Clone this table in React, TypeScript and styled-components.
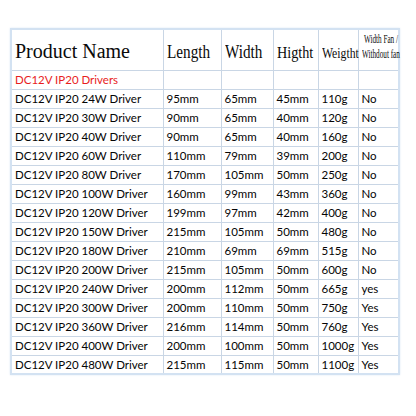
import styled, { createGlobalStyle } from 'styled-components';

const GlobalStyle = createGlobalStyle`
    html, body {
        margin: 0;
        padding: 0;
        background: #ffffff;
    }
`;

const Page = styled.div`
    width: 416px;
    height: 416px;
    padding: 28px 0 0 10px;
    box-sizing: border-box;
`;

const Table = styled.table`
    border-collapse: collapse;
    width: 390px;
    table-layout: fixed;
    border: 2px solid #d3e2f2;
    box-shadow: 0 0 2px #dce8f4;
`;

const HeadCell = styled.th`
    height: 41px;
    padding: 0 0 8px 3px;
    box-sizing: border-box;
    border: 1px solid #c9d6e5;
    font-family: 'Liberation Serif', 'Times New Roman', serif;
    font-weight: normal;
    color: #0a0a0a;
    text-align: left;
    vertical-align: bottom;
    white-space: nowrap;
`;

const HeadText = styled.span<{ $size: number; $scale: number }>`
    display: inline-block;
    font-size: ${({ $size }) => $size}px;
    line-height: 1;
    transform: scaleX(${({ $scale }) => $scale});
    transform-origin: left bottom;
`;

const FanText = styled.span`
    display: inline-block;
    font-size: 12px;
    line-height: 15px;
    text-align: center;
    transform: scaleX(0.6);
    transform-origin: left bottom;
    margin-bottom: -3px;
`;

const Cell = styled.td<{ $red?: boolean }>`
    height: 19px;
    padding: 0 0 0 3px;
    box-sizing: border-box;
    border: 1px solid #c9d6e5;
    font-family: Lato, 'Open Sans', sans-serif;
    font-size: 11.5px;
    color: ${({ $red }) => ($red ? '#e81d1d' : '#050505')};
    white-space: nowrap;
`;

const widths = [152, 58, 52, 45, 40, 41];

const rows = [
    ['DC12V IP20 24W Driver', '95mm', '65mm', '45mm', '110g', 'No'],
    ['DC12V IP20 30W Driver', '90mm', '65mm', '40mm', '120g', 'No'],
    ['DC12V IP20 40W Driver', '90mm', '65mm', '40mm', '160g', 'No'],
    ['DC12V IP20 60W Driver', '110mm', '79mm', '39mm', '200g', 'No'],
    ['DC12V IP20 80W Driver', '170mm', '105mm', '50mm', '250g', 'No'],
    ['DC12V IP20 100W Driver', '160mm', '99mm', '43mm', '360g', 'No'],
    ['DC12V IP20 120W Driver', '199mm', '97mm', '42mm', '400g', 'No'],
    ['DC12V IP20 150W Driver', '215mm', '105mm', '50mm', '480g', 'No'],
    ['DC12V IP20 180W Driver', '210mm', '69mm', '69mm', '515g', 'No'],
    ['DC12V IP20 200W Driver', '215mm', '105mm', '50mm', '600g', 'No'],
    ['DC12V IP20 240W Driver', '200mm', '112mm', '50mm', '665g', 'yes'],
    ['DC12V IP20 300W Driver', '200mm', '110mm', '50mm', '750g', 'Yes'],
    ['DC12V IP20 360W Driver', '216mm', '114mm', '50mm', '760g', 'Yes'],
    ['DC12V IP20 400W Driver', '200mm', '100mm', '50mm', '1000g', 'Yes'],
    ['DC12V IP20 480W Driver', '215mm', '115mm', '50mm', '1100g', 'Yes'],
];

const App = () => (
    <Page>
        <GlobalStyle />
        <Table>
            <colgroup>
                {widths.map((w, i) => (
                    <col key={i} style={{ width: w }} />
                ))}
            </colgroup>
            <thead>
                <tr>
                    <HeadCell>
                        <HeadText $size={20} $scale={1}>Product Name</HeadText>
                    </HeadCell>
                    <HeadCell>
                        <HeadText $size={19} $scale={0.8}>Length</HeadText>
                    </HeadCell>
                    <HeadCell>
                        <HeadText $size={19} $scale={0.8}>Width</HeadText>
                    </HeadCell>
                    <HeadCell>
                        <HeadText $size={16.5} $scale={0.86}>Higtht</HeadText>
                    </HeadCell>
                    <HeadCell>
                        <HeadText $size={15} $scale={0.78}>Weigtht</HeadText>
                    </HeadCell>
                    <HeadCell>
                        <FanText>
                            Width Fan /<br />
                            Withdout fan
                        </FanText>
                    </HeadCell>
                </tr>
            </thead>
            <tbody>
                <tr>
                    <Cell $red>DC12V IP20 Drivers</Cell>
                    <Cell />
                    <Cell />
                    <Cell />
                    <Cell />
                    <Cell />
                </tr>
                {rows.map(row => (
                    <tr key={row[0]}>
                        {row.map((value, i) => (
                            <Cell key={i}>{value}</Cell>
                        ))}
                    </tr>
                ))}
            </tbody>
        </Table>
    </Page>
);

export default App;
